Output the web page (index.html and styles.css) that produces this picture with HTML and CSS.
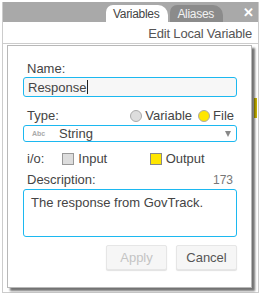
FILE: index.html
```html
<!DOCTYPE html>
<html>

<head>
  <title>Edit Local Variable</title>
  <link rel="stylesheet" href="styles.css">
</head>

<body>
  <div class="panel">
    <div class="tab-bar">
      <div class="tab active">Variables</div>
      <div class="tab">Aliases</div>
      <div class="close">&#x2715;</div>
    </div>
    <div class="header">Edit Local Variable</div>

    <div class="scroll-mark"></div>

    <div class="dialog">
      <label class="field-label">Name:</label>
      <div class="text-input">Response<span class="caret"></span></div>

      <div class="row">
        <span class="field-label">Type:</span>
        <div class="radios">
          <span class="radio"><span class="dot"></span>Variable</span>
          <span class="radio"><span class="dot on"></span>File</span>
        </div>
      </div>
      <div class="select">
        <span class="abc">Abc</span>
        <span class="select-value">String</span>
        <span class="arrow"></span>
      </div>

      <div class="io-row">
        <span class="io-label">i/o:</span>
        <span class="check"><span class="box"></span>Input</span>
        <span class="check"><span class="box on"></span>Output</span>
      </div>

      <div class="row desc-row">
        <span class="field-label">Description:</span>
        <span class="count">173</span>
      </div>
      <div class="textarea">The response from GovTrack.</div>

      <div class="buttons">
        <button class="btn" disabled>Apply</button>
        <button class="btn">Cancel</button>
      </div>
    </div>
  </div>
</body>

</html>
```

FILE: styles.css
```css
body {
  margin: 0;
  font-family: "Liberation Sans", Arial, sans-serif;
  background-color: #fff;
  color: #444;
}

.panel {
  position: relative;
  margin: 2px 0 0 2px;
  width: 255px;
  height: 290px;
  border: 1px solid #ccc;
  border-top: none;
}

.tab-bar {
  height: 20px;
  background-color: #a9a9a9;
  display: flex;
  align-items: flex-end;
  justify-content: flex-end;
  padding-right: 5px;
}

.tab {
  height: 17px;
  line-height: 18px;
  padding: 0 9px 0 7px;
  font-size: 12px;
  letter-spacing: -0.3px;
  color: #f2f2f2;
  background-color: #8b8b8b;
  border-radius: 7px 10px 0 0;
  margin-left: 2px;
}

.tab.active {
  background-color: #fff;
  color: #444;
}

.close {
  width: 10px;
  margin-left: 20px;
  align-self: center;
  text-align: center;
  color: #fff;
  font-size: 13px;
  font-weight: bold;
}

.header {
  height: 21px;
  line-height: 23px;
  border-bottom: 1px solid #ccc;
  text-align: right;
  padding-right: 6px;
  font-size: 13px;
  letter-spacing: -0.2px;
  color: #555;
}

.scroll-mark {
  position: absolute;
  right: 1px;
  top: 96px;
  width: 3px;
  height: 20px;
  background-color: #c8b400;
}

.dialog {
  position: relative;
  margin: 1px 0 0 4px;
  width: 214px;
  height: 226px;
  padding: 15px 14px 0 15px;
  border: 1px solid #b8b8b8;
  background-color: #fff;
  box-shadow: 3px 3px 2px rgba(0, 0, 0, 0.55);
}

.field-label {
  display: block;
  font-size: 13px;
  line-height: 15px;
  padding-left: 4px;
}

.text-input {
  height: 18px;
  margin-top: 1px;
  border: 1px solid #1cb8f0;
  border-radius: 3px;
  background-color: #f7f7f7;
  font-size: 13px;
  line-height: 19px;
  padding-left: 4px;
}

.caret {
  display: inline-block;
  width: 1px;
  height: 14px;
  vertical-align: -2px;
  background-color: #222;
}

.row {
  display: flex;
  justify-content: space-between;
  align-items: center;
  margin-top: 11px;
}

.radios {
  display: flex;
  gap: 6px;
  font-size: 13px;
  padding-right: 3px;
}

.radio {
  display: flex;
  align-items: center;
}

.dot {
  width: 10px;
  height: 10px;
  border: 1px solid #aaa;
  border-radius: 50%;
  background-color: #ddd;
  margin-right: 3px;
}

.dot.on {
  background-color: #ffe600;
}

.select {
  display: flex;
  align-items: center;
  height: 15px;
  margin-top: 2px;
  border: 1px solid #1cb8f0;
  border-radius: 3px;
  padding: 0 5px 0 8px;
  font-size: 13px;
}

.abc {
  font-size: 7px;
  font-weight: bold;
  color: #aaa;
  width: 27px;
}

.select-value {
  flex: 1;
}

.arrow {
  width: 0;
  height: 0;
  border-left: 3.5px solid transparent;
  border-right: 3.5px solid transparent;
  border-top: 6px solid #888;
}

.io-row {
  display: flex;
  align-items: center;
  margin-top: 9px;
  padding-left: 4px;
  font-size: 13px;
}

.io-label {
  width: 38px;
}

.check {
  display: flex;
  align-items: center;
  width: 94px;
}

.box {
  width: 10px;
  height: 10px;
  border: 1px solid #999;
  background-color: #ddd;
  margin-right: 4px;
}

.box.on {
  background-color: #ffe600;
  border-color: #888;
}

.desc-row {
  margin-top: 6px;
}

.count {
  font-size: 12px;
  color: #777;
  padding-right: 4px;
}

.textarea {
  height: 41px;
  margin-top: 2px;
  border: 1px solid #1cb8f0;
  border-radius: 3px;
  padding: 5px 7px 0;
  font-size: 13px;
}

.buttons {
  display: flex;
  justify-content: flex-end;
  gap: 9px;
  margin-top: 8px;
}

.btn {
  width: 61px;
  height: 25px;
  font-family: "Liberation Sans", Arial, sans-serif;
  font-size: 13px;
  color: #555;
  background-color: #f6f6f6;
  border: 1px solid #e6e6e6;
  border-radius: 2px;
  box-shadow: 0 1px 1px rgba(0, 0, 0, 0.12);
}

.btn:disabled {
  color: #c4c4c4;
}
```
